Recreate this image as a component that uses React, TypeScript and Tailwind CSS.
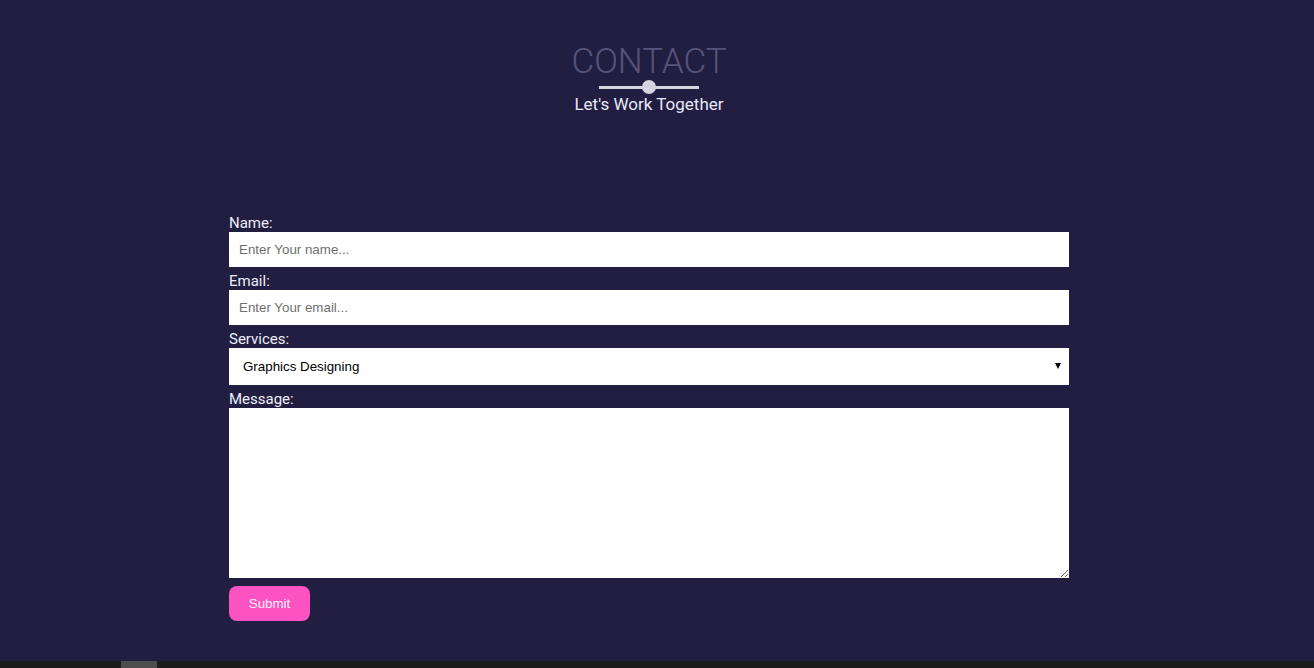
import { ChangeEvent, useState } from 'react';

const services = ['Graphics Designing', 'Web Development', 'App Development', 'SEO'];

export default function App() {
  const [service, setService] = useState(services[0]);

  return (
    <div className="min-h-screen bg-[#221e41] flex flex-col" style={{ fontFamily: 'Roboto, "Liberation Sans", sans-serif' }}>
      <section className="h-[661px] pr-[16px] flex flex-col">
        {/* Heading */}
        <div className="pt-[43px] flex flex-col items-center">
          <h2 className="text-[35px] leading-[37px] font-light text-[#57537a]">CONTACT</h2>
          <div className="relative w-[100px] h-[14px] flex items-center justify-center">
            <div className="w-full h-[3px] bg-[#d6d5df]" />
            <div className="absolute w-[14px] h-[14px] rounded-full bg-[#d6d5df]" />
          </div>
          <p className="text-[17px] leading-[20px] text-[#e8e8f6]">Let's Work Together</p>
        </div>

        {/* Form */}
        <form className="w-[840px] mx-auto mt-[100px] flex flex-col" onSubmit={(e) => e.preventDefault()}>
          <label className="text-[15px] leading-[18px] text-[#eeeef8]">Name:</label>
          <input
            type="text"
            placeholder="Enter Your name..."
            className="h-[35px] w-full bg-white px-[10px] text-[13.33px] text-black placeholder:text-[#6f6f6f] outline-none"
            style={{ fontFamily: '"Liberation Sans", Arial, sans-serif' }}
          />
          <label className="mt-[5px] text-[15px] leading-[18px] text-[#eeeef8]">Email:</label>
          <input
            type="email"
            placeholder="Enter Your email..."
            className="h-[35px] w-full bg-white px-[10px] text-[13.33px] text-black placeholder:text-[#6f6f6f] outline-none"
            style={{ fontFamily: '"Liberation Sans", Arial, sans-serif' }}
          />
          <label className="mt-[5px] text-[15px] leading-[18px] text-[#eeeef8]">Services:</label>
          <div className="relative">
            <select
              value={service}
              onChange={(e: ChangeEvent<HTMLSelectElement>) => setService(e.target.value)}
              className="appearance-none h-[37px] w-full bg-white pl-[14px] pr-8 text-[13.33px] text-black outline-none"
              style={{ fontFamily: '"Liberation Sans", Arial, sans-serif' }}
            >
              {services.map((s) => (
                <option key={s}>{s}</option>
              ))}
            </select>
            {/* dropdown arrow */}
            <svg className="absolute right-[8px] top-[15px] pointer-events-none" width="6" height="6" viewBox="0 0 6 6">
              <path d="M0 0H6L3 6Z" fill="#000" />
            </svg>
          </div>
          <label className="mt-[5px] text-[15px] leading-[18px] text-[#eeeef8]">Message:</label>
          <textarea className="block h-[170px] w-full bg-white p-2 text-[14px] text-black outline-none" />
          <div className="mt-[8px]">
            <button
              type="submit"
              className="w-[81px] h-[35px] rounded-lg bg-[#fd52c2] text-[13.33px] text-[#fff0fa]"
              style={{ fontFamily: '"Liberation Sans", Arial, sans-serif' }}
            >
              Submit
            </button>
          </div>
        </form>
      </section>

      {/* bottom scroll strip */}
      <div className="h-[7px] bg-[#1c1c1c] flex">
        <div className="ml-[121px] w-[36px] h-full bg-[#4d4d4d]" />
      </div>
    </div>
  );
}
